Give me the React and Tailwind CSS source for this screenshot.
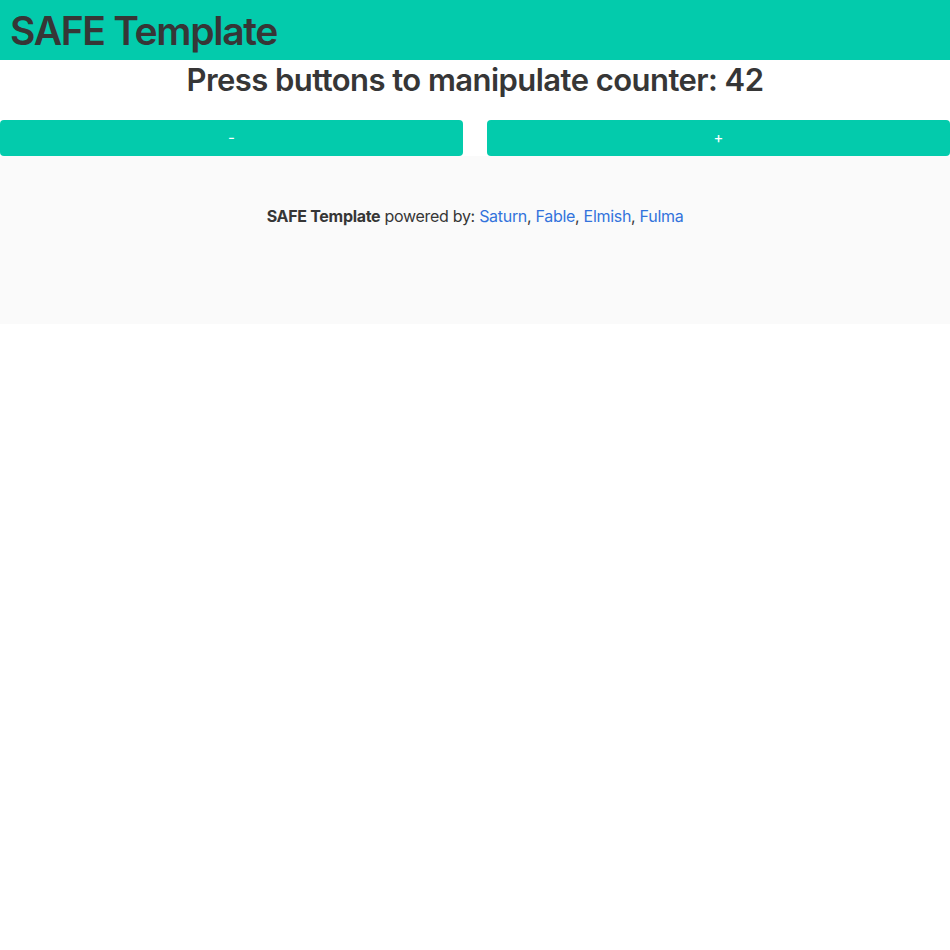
import React from "react";

export default function App() {
  return (
    <div className="min-h-[950px] bg-white text-[#363636]" style={{ fontFamily: "Inter, 'Liberation Sans', sans-serif" }}>
      <nav className="h-[60px] bg-[#03cbac] flex items-center px-[10px]">
        <h1 className="text-[39px] tracking-[-1.3px] font-semibold leading-none">SAFE Template</h1>
      </nav>
      <div className="flex flex-col">
        <h2 className="text-center text-[31px] tracking-[-0.55px] font-semibold leading-[40px] h-[60px]">
          Press buttons to manipulate counter: 42
        </h2>
        <div className="flex gap-[24px]">
          <button className="flex-1 h-[36px] bg-[#03cbac] text-white rounded-[4px] text-[15px]">-</button>
          <button className="flex-1 h-[36px] bg-[#03cbac] text-white rounded-[4px] text-[15px]">+</button>
        </div>
      </div>
      <footer className="bg-[#fafafa] h-[168px] pt-[48px] text-center text-[16px] tracking-[-0.3px]">
        <p>
          <strong className="font-bold">SAFE Template</strong> powered by:{" "}
          <a className="text-[#3273dc]">Saturn</a>, <a className="text-[#3273dc]">Fable</a>,{" "}
          <a className="text-[#3273dc]">Elmish</a>, <a className="text-[#3273dc]">Fulma</a>
        </p>
      </footer>
    </div>
  );
}
